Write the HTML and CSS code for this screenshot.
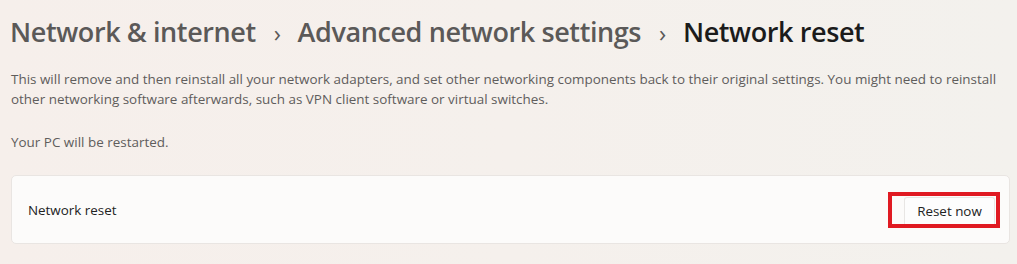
FILE: index.html
```html
<html>
    <head>
        <meta charset="utf-8" />
        <title>Network reset</title>
        <link rel="stylesheet" href="styles.css">
    </head>
    <body>
        <div class="page">
            <div class="breadcrumb">
                <span class="crumb">Network &amp; internet</span>
                <span class="sep">&#8250;</span>
                <span class="crumb">Advanced network settings</span>
                <span class="sep">&#8250;</span>
                <span class="crumb current">Network reset</span>
            </div>
            <p class="desc">This will remove and then reinstall all your network adapters, and set other networking components back to their original settings. You might need to reinstall other networking software afterwards, such as VPN client software or virtual switches.</p>
            <p class="desc">Your PC will be restarted.</p>
            <div class="card">
                <span class="card-title">Network reset</span>
                <div class="highlight">
                    <button type="button" class="btn">Reset now</button>
                </div>
            </div>
        </div>
    </body>
</html>
```

FILE: styles.css
```css
body{
    margin: 0;
    background: linear-gradient(90deg, #f6efeb 0%, #f5f0ec 50%, #f3f1ed 100%);
    font-family: "Segoe UI", "Open Sans", sans-serif;
    width: 1017px;
    height: 264px;
    overflow: hidden;
}

.page{
    padding: 0 7px 0 11px;
}

.breadcrumb{
    display: flex;
    align-items: baseline;
    padding-top: 13px;
    height: 44px;
    margin-left: -1px;
    font-size: 27px;
    font-weight: 600;
    color: #5b5958;
    letter-spacing: -0.4px;
}

.sep{
    font-size: 24px;
    font-weight: 400;
    padding: 0 17px 0 18px;
}

.current{
    color: #1b1b1b;
}

.desc{
    margin: 0;
    max-width: 990px;
    font-size: 13.45px;
    line-height: 20px;
    color: #5f5d5c;
}

.desc:first-of-type{
    margin-top: 12px;
}

.desc + .desc{
    margin-top: 23px;
}

.card{
    display: flex;
    align-items: center;
    justify-content: space-between;
    margin-top: 23px;
    height: 67px;
    background-color: #fcfbfa;
    border: 1px solid #e9e5e2;
    border-radius: 5px;
    padding: 0 9px 0 16px;
}

.card-title{
    font-size: 13.4px;
    color: #222;
}

.highlight{
    border: 4px solid #e01a22;
    padding: 1px 1px 0 12px;
}

.btn{
    font-family: inherit;
    font-size: 13.4px;
    color: #222;
    background-color: #fdfdfd;
    border: 1px solid #e8e6e4;
    border-bottom: none;
    border-radius: 3px 3px 0 0;
    height: 27px;
    width: 91px;
    padding: 0;
}
```
